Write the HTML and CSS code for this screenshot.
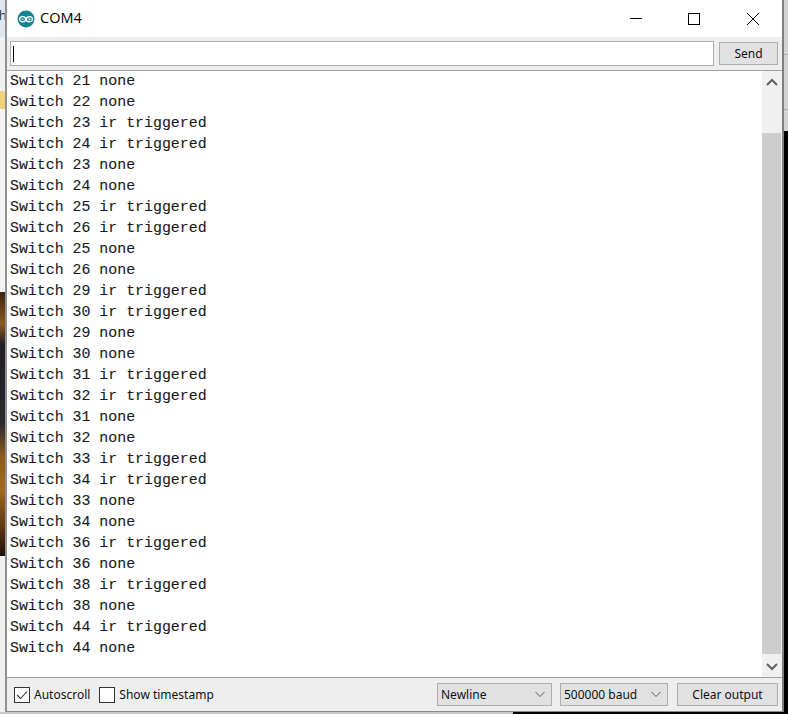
FILE: index.html
```html
<!DOCTYPE html>
<html lang="en">
<head>
<meta charset="utf-8">
<title>COM4</title>
<link rel="stylesheet" href="styles.css">
</head>
<body>
<div class="desktop">
  <div class="bg-left">
    <div class="bg-a">th</div>
    <div class="bg-b"></div>
    <div class="bg-c"></div>
    <div class="bg-d"></div>
    <div class="bg-e"></div>
    <div class="bg-f"></div>
  </div>
  <div class="bg-right"><div class="bg-g"></div></div>
  <div class="bg-bottom"></div>
  <main class="window">
    <header class="titlebar">
      <svg class="logo" width="18" height="18" viewBox="0 0 18 18"><circle cx="9" cy="9" r="8.5" fill="#12848f"/><ellipse cx="5.6" cy="9.3" rx="3" ry="2.6" fill="none" stroke="#fff" stroke-width="1.2"/><ellipse cx="12.4" cy="9.3" rx="3" ry="2.6" fill="none" stroke="#fff" stroke-width="1.2"/><path d="M4.500 9.300h2.200M11.300 9.300h2.200M12.400 8.200v2.200" stroke="#fff" stroke-width=".8"/></svg>
      <span class="title">COM4</span>
      <div class="winbtns">
        <svg class="winbtn" width="58" height="36" viewBox="0 0 58 36"><path d="M25 17.500h12" stroke="#000"/></svg>
        <svg class="winbtn" width="59" height="36" viewBox="0 0 59 36"><rect x="25.500" y="12.500" width="11" height="11" fill="none" stroke="#000"/></svg>
        <svg class="winbtn" width="60" height="36" viewBox="0 0 60 36"><path d="M25 12l12 12M37 12l-12 12" stroke="#000" fill="none"/></svg>
      </div>
    </header>
    <div class="sendrow">
      <div class="input"><span class="caret"></span></div>
      <button class="btn send">Send</button>
    </div>
    <div class="output">
      <pre class="log">Switch 21 none
Switch 22 none
Switch 23 ir triggered
Switch 24 ir triggered
Switch 23 none
Switch 24 none
Switch 25 ir triggered
Switch 26 ir triggered
Switch 25 none
Switch 26 none
Switch 29 ir triggered
Switch 30 ir triggered
Switch 29 none
Switch 30 none
Switch 31 ir triggered
Switch 32 ir triggered
Switch 31 none
Switch 32 none
Switch 33 ir triggered
Switch 34 ir triggered
Switch 33 none
Switch 34 none
Switch 36 ir triggered
Switch 36 none
Switch 38 ir triggered
Switch 38 none
Switch 44 ir triggered
Switch 44 none</pre>
      <div class="scrollbar">
        <div class="arrow"><svg width="14" height="10" viewBox="0 0 14 10"><path d="M2 8l5-5 5 5" fill="none" stroke="#606060" stroke-width="2"/></svg></div>
        <div class="track"><div class="thumb"></div></div>
        <div class="arrow"><svg width="14" height="10" viewBox="0 0 14 10"><path d="M2 2l5 5 5-5" fill="none" stroke="#606060" stroke-width="2"/></svg></div>
      </div>
    </div>
    <footer class="footer">
      <label class="check first"><span class="box"><svg width="14" height="14" viewBox="0 0 14 14"><path d="M2 7l3.500 3.500L12 3.500" fill="none" stroke="#333" stroke-width="1.100"/></svg></span>Autoscroll</label>
      <label class="check"><span class="box"></span>Show timestamp</label>
      <div class="spacer"></div>
      <div class="select newline"><span>Newline</span><svg width="12" height="7" viewBox="0 0 12 7"><path d="M1.500 1l4.500 4.500L10.500 1" fill="none" stroke="#555"/></svg></div>
      <div class="select baud"><span>500000 baud</span><svg width="12" height="7" viewBox="0 0 12 7"><path d="M1.500 1l4.500 4.500L10.500 1" fill="none" stroke="#555"/></svg></div>
      <button class="btn clear">Clear output</button>
    </footer>
  </main>
</div>
</body>
</html>
```
FILE: styles.css
```css
* { box-sizing: border-box; }
html, body { margin: 0; padding: 0; }
body { width: 788px; height: 714px; overflow: hidden; background: #000; }
.desktop { position: relative; width: 788px; height: 714px; overflow: hidden; }

.bg-left { position: absolute; left: 0; top: 0; width: 6px; height: 714px; display: flex; flex-direction: column; }
.bg-a { height: 37px; background: #dfe6ec; color: #345; font: 13px/30px "Noto Sans", sans-serif; overflow: hidden; text-indent: -6px; }
.bg-b { height: 54px; background: #f0f0f0; }
.bg-c { height: 18px; background: #f0d278; }
.bg-d { height: 183px; background: #f5f5f5; }
.bg-e { height: 264px; background: linear-gradient(180deg, #3a2410 0, #8a5a1e 12%, #1e1e20 20%, #2a2a2c 50%, #8c5a1c 62%, #a06820 75%, #5a3412 90%, #1c1008 100%); }
.bg-f { flex: 1; background: #f0f0f0; }
.bg-right { position: absolute; right: 0; top: 0; width: 5px; height: 714px; background: #000; }
.bg-g { height: 131px; background: repeating-linear-gradient(180deg, #d4d4d4 0, #d4d4d4 54px, #a8a8a8 54px, #a8a8a8 55px); }
.bg-bottom { position: absolute; left: 0; bottom: 0; width: 513px; height: 2px; background: #c8c8c8; }

.window {
  position: absolute; left: 5px; top: 0; width: 779px; height: 712px;
  display: flex; flex-direction: column; background: #eeeeee;
  border-left: 2px solid #8e9094; border-right: 2px solid #7d7f84; border-bottom: 1px solid #8a8a8a;
  font-family: "Noto Sans", sans-serif; color: #111;
}
.titlebar { height: 37px; background: #fff; display: flex; align-items: center; flex: none; padding-left: 10px; }
.logo { flex: none; }
.title { margin-left: 5px; font: 14.500px "Open Sans", sans-serif; color: #000; position: relative; top: -1px; }
.winbtns { margin-left: auto; display: flex; }
.winbtn { display: block; }

.sendrow { height: 33px; flex: none; display: flex; align-items: flex-start; padding: 4px 4px 0 3px; gap: 5px; }
.input { width: 704px; height: 25px; background: #fff; border: 1px solid #ababab; padding: 4px 0 0 2px; }
.caret { display: block; width: 1px; height: 16px; background: #000; }
.btn { background: #e1e1e1; border: 1px solid #adadad; font: 12px "Noto Sans", sans-serif; color: #111; padding: 0; }
.send { width: 59px; height: 23px; margin-top: 1px; }

.output { flex: 1; min-height: 0; display: flex; background: #fff; border-top: 1px solid #a0a0a0; border-bottom: 1px solid #a0a0a0; }
.log { flex: 1; margin: 0; padding: 0 0 0 3px; font: 14.900px/21px "Liberation Mono", monospace; -webkit-text-stroke: 0.12px #1a1a1a; color: #1a1a1a; overflow: hidden; }
.scrollbar { width: 20px; flex: none; background: #f0f0f0; display: flex; flex-direction: column; }
.arrow { height: 21px; flex: none; display: flex; align-items: center; justify-content: center; }
.track { flex: 1; padding-top: 41px; }
.thumb { height: 521px; width: 19px; background: #cdcdcd; }

.footer { height: 33px; flex: none; display: flex; align-items: center; padding: 0 4px 0 7px; font-size: 12px; }
.check { display: flex; align-items: center; }
.check.first { margin-right: 9px; }
.box { width: 16px; height: 16px; background: #fff; border: 1px solid #333; margin-right: 4px; display: flex; align-items: center; justify-content: center; }
.spacer { flex: 1; }
.select { height: 23px; background: #e1e1e1; border: 1px solid #adadad; display: flex; align-items: center; justify-content: space-between; padding: 0 5px 0 3px; }
.newline { width: 115px; margin-right: 8px; }
.baud { width: 108px; margin-right: 9px; }
.clear { width: 101px; height: 23px; }
```
